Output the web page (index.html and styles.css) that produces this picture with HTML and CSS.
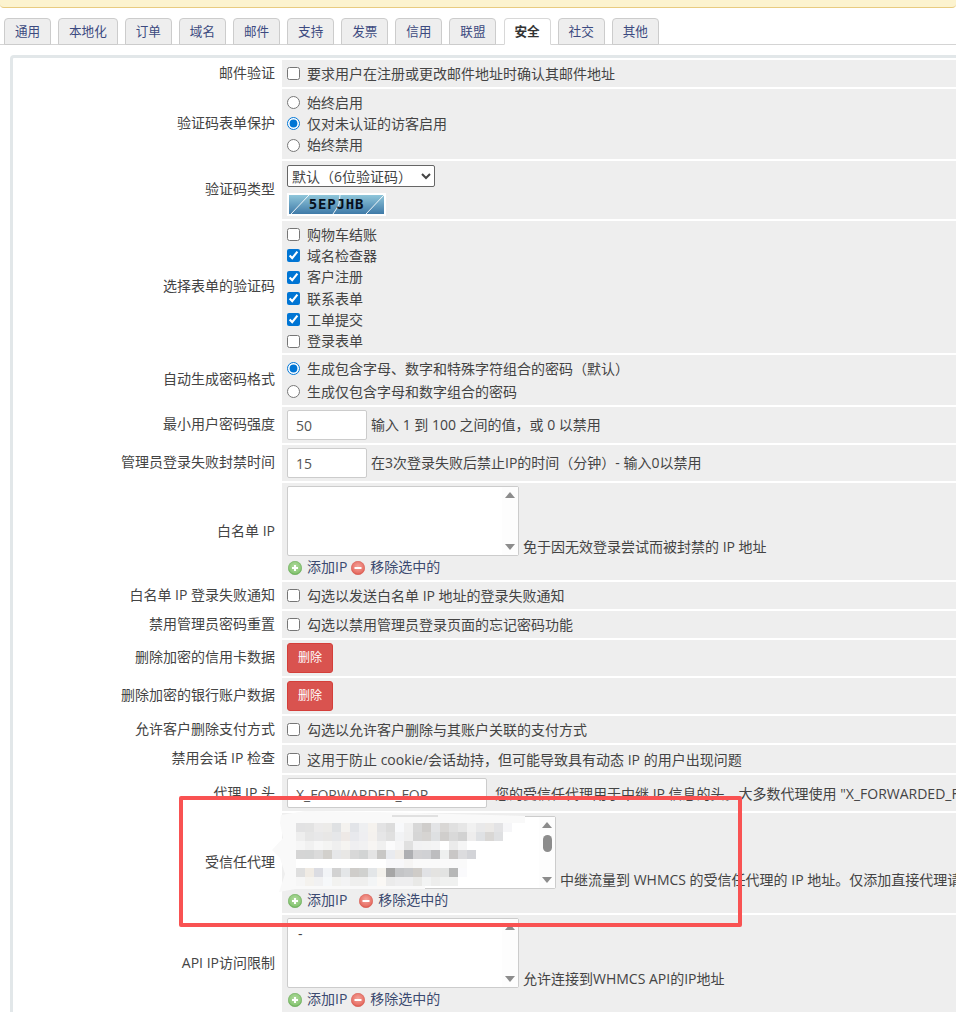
FILE: index.html
```html
<!DOCTYPE html>
<html lang="zh-CN">
<head>
<meta charset="utf-8">
<title>安全设置</title>
<link rel="stylesheet" href="styles.css">
</head>
<body>
<div class="notice"></div>
<ul class="tabs">
  <li><a>通用</a></li><li><a>本地化</a></li><li><a>订单</a></li><li><a>域名</a></li><li><a>邮件</a></li><li><a>支持</a></li><li><a>发票</a></li><li><a>信用</a></li><li><a>联盟</a></li><li class="active"><a>安全</a></li><li><a>社交</a></li><li><a>其他</a></li>
</ul>
<div class="panel">
  <div class="row h27"><div class="lbl">邮件验证</div><div class="fld"><label class="opt"><input type="checkbox">要求用户在注册或更改邮件地址时确认其邮件地址</label></div></div>
  <div class="row h70"><div class="lbl">验证码表单保护</div><div class="fld">
    <label class="opt"><input type="radio" name="c">始终启用</label>
    <label class="opt"><input type="radio" name="c" checked>仅对未认证的访客启用</label>
    <label class="opt"><input type="radio" name="c">始终禁用</label>
  </div></div>
  <div class="row h58"><div class="lbl">验证码类型</div><div class="fld">
    <select class="sel"><option>默认（6位验证码）</option></select>
    <div class="captcha"><svg class="captcha-lines" viewBox="0 0 95 19" width="95" height="19"><path d="M2 19 20 0M77 19 95 0M44 19 48 13 50 9 51 0" /></svg><span>5EPJHB</span></div>
  </div></div>
  <div class="row h132"><div class="lbl">选择表单的验证码</div><div class="fld">
    <label class="opt"><input type="checkbox">购物车结账</label>
    <label class="opt"><input type="checkbox" checked>域名检查器</label>
    <label class="opt"><input type="checkbox" checked>客户注册</label>
    <label class="opt"><input type="checkbox" checked>联系表单</label>
    <label class="opt"><input type="checkbox" checked>工单提交</label>
    <label class="opt"><input type="checkbox">登录表单</label>
  </div></div>
  <div class="row h50"><div class="lbl">自动生成密码格式</div><div class="fld">
    <label class="opt"><input type="radio" name="p" checked>生成包含字母、数字和特殊字符组合的密码（默认）</label>
    <label class="opt"><input type="radio" name="p">生成仅包含字母和数字组合的密码</label>
  </div></div>
  <div class="row h36"><div class="lbl">最小用户密码强度</div><div class="fld inline"><input class="txt w80" value="50"><span>输入 1 到 100 之间的值，或 0 以禁用</span></div></div>
  <div class="row h36"><div class="lbl">管理员登录失败封禁时间</div><div class="fld inline"><input class="txt w80" value="15"><span>在3次登录失败后禁止IP的时间（分钟）- 输入0以禁用</span></div></div>
  <div class="row h97"><div class="lbl">白名单 IP</div><div class="fld list-fld">
    <div class="list-line"><div class="listbox w232"><div class="sb"><i class="up"></i><i class="down"></i></div></div><span class="hint">免于因无效登录尝试而被封禁的 IP 地址</span></div>
    <div class="actions"><svg class="ic" viewBox="0 0 14 14"><use href="#plus"/></svg><a>添加IP</a><svg class="ic ic-rm" viewBox="0 0 14 14"><use href="#minus"/></svg><a>移除选中的</a></div>
  </div></div>
  <div class="row h27"><div class="lbl">白名单 IP 登录失败通知</div><div class="fld"><label class="opt"><input type="checkbox">勾选以发送白名单 IP 地址的登录失败通知</label></div></div>
  <div class="row h27"><div class="lbl">禁用管理员密码重置</div><div class="fld"><label class="opt"><input type="checkbox">勾选以禁用管理员登录页面的忘记密码功能</label></div></div>
  <div class="row h36"><div class="lbl">删除加密的信用卡数据</div><div class="fld inline"><button class="del">删除</button></div></div>
  <div class="row h36"><div class="lbl">删除加密的银行账户数据</div><div class="fld inline"><button class="del">删除</button></div></div>
  <div class="row h27"><div class="lbl">允许客户删除支付方式</div><div class="fld"><label class="opt"><input type="checkbox">勾选以允许客户删除与其账户关联的支付方式</label></div></div>
  <div class="row h28"><div class="lbl">禁用会话 IP 检查</div><div class="fld"><label class="opt"><input type="checkbox">这用于防止 cookie/会话劫持，但可能导致具有动态 IP 的用户出现问题</label></div></div>
  <div class="row h36"><div class="lbl lbl-low">代理 IP 头</div><div class="fld inline"><input class="txt w200 txt-low" value="X_FORWARDED_FOR"><span class="gap-l">您的受信任代理用于中继 IP 信息的头。大多数代理使用 "X_FORWARDED_FOR"。</span></div></div>
  <div class="row h100"><div class="lbl">受信任代理</div><div class="fld list-fld">
    <div class="list-line"><div class="listbox w269"><div class="sb"><i class="up"></i><b class="thumb"></b><i class="down"></i></div></div><span class="hint">中继流量到 WHMCS 的受信任代理的 IP 地址。仅添加直接代理请求到您服务器的代理。</span></div>
    <div class="actions"><svg class="ic" viewBox="0 0 14 14"><use href="#plus"/></svg><a>添加IP</a><svg class="ic ic-rm wide" viewBox="0 0 14 14"><use href="#minus"/></svg><a>移除选中的</a></div>
  </div></div>
  <div class="row h97"><div class="lbl">API IP访问限制</div><div class="fld list-fld">
    <div class="list-line"><div class="listbox w232"><span class="item">-</span><div class="sb"><i class="up"></i><i class="down"></i></div></div><span class="hint">允许连接到WHMCS API的IP地址</span></div>
    <div class="actions"><svg class="ic" viewBox="0 0 14 14"><use href="#plus"/></svg><a>添加IP</a><svg class="ic ic-rm" viewBox="0 0 14 14"><use href="#minus"/></svg><a>移除选中的</a></div>
  </div></div>
</div>

<svg class="defs" width="0" height="0">
  <defs>
    <radialGradient id="gg" cx="50%" cy="40%" r="65%"><stop offset="0" stop-color="#b5dca2"/><stop offset=".7" stop-color="#8cc878"/><stop offset="1" stop-color="#5aa648"/></radialGradient>
    <radialGradient id="gr" cx="50%" cy="40%" r="65%"><stop offset="0" stop-color="#f4a59c"/><stop offset=".7" stop-color="#e8746a"/><stop offset="1" stop-color="#d44b3f"/></radialGradient>
    <g id="plus"><circle cx="7" cy="7" r="6.7" fill="url(#gg)" stroke="#6bab59" stroke-width=".6"/><path d="M7 4v6M4 7h6" stroke="#fff" stroke-width="2"/></g>
    <g id="minus"><circle cx="7" cy="7" r="6.7" fill="url(#gr)" stroke="#d65a50" stroke-width=".6"/><path d="M3.5 7h7" stroke="#fff" stroke-width="2"/></g>
  </defs>
</svg>

<div class="mosaic">
  <svg class="blob" viewBox="0 0 255 84" width="255" height="84"><path class="blob-fill" d="M6 7 30 3 100 4 250 8V15H21V76H150V81H20L4 84 10 66 5 50-3 42 8 30 5 15Z"/><path class="blob-edge" d="M117 8H163"/></svg>
  <div class="mr mr1"></div>
  <div class="mr mr2"></div>
  <div class="mr mr3"></div>
  <div class="mr mr4"></div>
  <div class="mr mr5"></div>
  <div class="mr mr6"></div>
  <div class="mr mr7"></div>
</div>
<div class="callout"></div>
</body>
</html>
```
FILE: styles.css
```css
* { box-sizing: border-box; }
html, body { margin: 0; height: 1012px; overflow: hidden; background: #fff; }
body {
  position: relative;
  font: 14px/20px "Open Sans", "Noto Sans CJK SC", sans-serif;
  color: #333;
  white-space: nowrap;
}
.notice {
  height: 8px;
  background: #fcf3cf;
  border-bottom: 1px solid #e8cb80;
  border-radius: 0 0 4px 4px;
}
.tabs {
  display: flex;
  gap: 7.15px;
  list-style: none;
  margin: 10px 0 0;
  padding: 0 0 0 4px;
  height: 27px;
  border-bottom: 1px solid #d4d4d4;
}
.tabs li {
  height: 27px;
  padding: 0 9.9px;
  background: #eee;
  border: 1px solid #ccc;
  border-radius: 4px 4px 0 0;
  font-size: 12.6px;
  line-height: 25px;
  color: #3c4a80;
}
.tabs li.active {
  background: #fff;
  border-color: #d8d8d8;
  border-bottom-color: #fff;
  color: #333;
  font-weight: 600;
}
.panel {
  margin: 10px 0 0 10px;
  border-left: 3px solid #e2e7e9;
  border-top: 3px solid #e2e7e9;
  border-radius: 4px 0 0 0;
  padding: 2px 0 0 2px;
}
.row { display: flex; margin-bottom: 2px; }
.h27 { height: 27px; }
.h28 { height: 28px; }
.h36 { height: 36px; }
.h50 { height: 50px; }
.h58 { height: 58px; }
.h70 { height: 70px; }
.h97 { height: 97px; }
.h100 { height: 100px; }
.h132 { height: 132px; }
.lbl {
  flex: 0 0 267px;
  display: flex;
  align-items: center;
  justify-content: flex-end;
  padding: 0 7px 2px 0;
  color: #444;
}
.lbl-low { padding-bottom: 0; }
.fld {
  flex: 1;
  min-width: 0;
  padding: 3px 0 0 5px;
  background: #eee;
  color: #444;
}
.h28 > .fld { padding-top: 4px; }
.h50 > .fld { padding-top: 2px; }
.opt {
  display: flex;
  align-items: center;
  height: 21.3px;
}
.h50 .opt { height: 23px; }
.opt input {
  flex: none;
  width: 13px;
  height: 13px;
  margin: 0 7px 0 0;
  accent-color: #0075d4;
}
.sel {
  display: block;
  width: 148px;
  height: 22px;
  margin: 1px 0 6px;
  padding: 0;
  font: inherit;
  color: #444;
  background: #fff;
  border: 1px solid #666;
  border-radius: 2px;
}
.captcha {
  position: relative;
  width: 99px;
  height: 23px;
  border: 2px solid #fff;
  background: linear-gradient(#8fc6da, #3f7aa8);
  text-align: center;
  font: bold 14px/19px "DejaVu Sans Mono", monospace;
  letter-spacing: .8px;
  color: #06101c;
}
.captcha span { position: relative; }
.captcha-lines { position: absolute; left: 0; top: 0; }
.captcha-lines path { fill: none; stroke: #fff; stroke-width: 1; opacity: .9; }
.inline {
  display: flex;
  align-items: center;
  padding-top: 0;
}
.txt {
  flex: none;
  height: 30px;
  padding: 0 8px;
  font: inherit;
  color: #555;
  background: #fff;
  border: 1px solid #ccc;
  border-radius: 2px;
  outline: 0;
}
.txt-low { padding-top: 2px; }
.w80 { width: 80px; margin-right: 4px; }
.w200 { width: 200px; }
.gap-l { margin: 2px 0 0 8px; }
.list-line { display: flex; align-items: flex-end; }
.listbox {
  flex: none;
  position: relative;
  height: 70px;
  background: #fff;
  border: 1px solid #ccc;
  border-radius: 2px;
  padding: 5px 10px;
}
.w232 { width: 232px; }
.w269 { width: 269px; height: 73px; }
.hint { margin: 0 0 -1px 4px; }
.item { display: block; line-height: 20px; }
.sb {
  position: absolute;
  top: 0;
  right: 0;
  bottom: 0;
  width: 16px;
  display: flex;
  flex-direction: column;
  align-items: center;
  background: #fdfdfd;
}
.sb i { width: 0; height: 0; border: 5px solid transparent; border-top: 0; border-bottom: 0; }
.up { border-bottom: 6px solid #8c8c8c !important; margin-top: 5px; }
.down { border-top: 6px solid #8c8c8c !important; margin-top: auto; margin-bottom: 5px; }
.thumb { width: 9px; height: 17px; margin-top: 7px; background: #8c8c8c; border-radius: 5px; }
.actions {
  display: flex;
  align-items: center;
  height: 22px;
  color: #3c4a70;
}
.ic { width: 14px; height: 14px; margin: 1px 5px 0 1px; flex: none; }
.ic-rm { margin-left: 4px; }
.wide { margin-left: 12px; }
.del {
  width: 46px;
  height: 30px;
  padding: 0;
  font: 12px/1 "Open Sans", "Noto Sans CJK SC", sans-serif;
  color: #fff;
  background: #d9534f;
  border: 1px solid #d43f3a;
  border-radius: 3px;
}
.defs { position: absolute; }
.mosaic {
  position: absolute;
  left: 275px;
  top: 808px;
  width: 255px;
  height: 84px;
  padding: 15px 0 0 21px;
}
.blob { position: absolute; left: 0; top: 0; overflow: visible; }
.blob-fill { fill: #f9f9f9; }
.blob-edge { stroke: #c8c8c8; stroke-width: 1; }
.mr { position: relative; height: 9px; }
.mr1 { background: linear-gradient(90deg, #e2e2e3 0 9px, #e3e3e3 9px 18px, #ecebeb 18px 27px, #ecebe9 27px 36px, #dfe1e3 36px 45px, #f4f2ef 45px 54px, #e2e4e8 54px 63px, #eeeff1 63px 72px, #f5f2ee 72px 81px, #e3e3e4 81px 90px, #dcdcdc 90px 99px, #f8f9fb 99px 108px, #f0f0f0 108px 117px, #d8d8d8 117px 126px, #cfcdcb 126px 135px, #e3e4e6 135px 144px, #d9d7d5 144px 153px, #e0e0e0 153px 162px, #e6e6e6 162px 171px, #f1f1f1 171px 180px, #e9e9ea 180px 189px, #ebe9e7 189px 198px, #e3e3e5 198px 207px, #f6f6f8 207px 216px, transparent 216px); }
.mr2 { background: linear-gradient(90deg, #eeeeee 0 9px, #e6e6e6 9px 18px, #e8e8e9 18px 27px, #e8e7e6 27px 36px, #e6e7e9 36px 45px, #eee9e6 45px 54px, #e8e9ed 54px 63px, #eeeef1 63px 72px, #f4f1ee 72px 81px, #e6e6e7 81px 90px, #e0e0e0 90px 99px, #f2f3f5 99px 108px, #efefef 108px 117px, #d6d6d6 117px 126px, #d6d4d2 126px 135px, #dee0e2 135px 144px, #d0cecc 144px 153px, #d9d9d9 153px 162px, #d2d2d2 162px 171px, #eeeded 171px 180px, #dfe1e4 180px 189px, #d9d7d5 189px 198px, #dfe0e2 198px 207px, transparent 207px); }
.mr3 { background: linear-gradient(90deg, #f6f6f6 0 9px, #f1f1f1 9px 18px, #f7f7f7 18px 27px, #f4f4f3 27px 36px, #efefef 36px 45px, #f5f4f1 45px 54px, #efeff1 54px 63px, #f1f1f2 63px 72px, #f7f5f3 72px 81px, #f0f0f0 81px 90px, #fbfbfc 90px 99px, #f5f5f6 99px 108px, #e0e0e0 108px 117px, #f2f2f3 117px 126px, #f3f3f3 126px 135px, #f4f4f5 135px 144px, #ffffff 144px 153px, #ebebeb 153px 162px, #f5f5f5 162px 171px, transparent 171px); }
.mr4 { background: linear-gradient(90deg, #d5d5d5 0 9px, #d4d5d5 9px 18px, #dbdbdb 18px 27px, #d2d0cc 27px 36px, #e6e7e9 36px 45px, #e8e7e5 45px 54px, #d8d8d8 54px 63px, #d2d4d4 63px 72px, #e4e4e4 72px 81px, #c8c7c5 81px 90px, #e9ebef 90px 99px, #efece8 99px 108px, #aeafb2 108px 117px, #d2d2d4 117px 126px, #d0d1d4 126px 135px, #bdbdbf 135px 144px, #eef0ef 144px 153px, #c9c7c6 153px 162px, #dcdcde 162px 171px, #d3d4d8 171px 180px, transparent 180px); }
.mr5 { background: linear-gradient(90deg, transparent 0 90px, #f8f8fa 90px 108px, #f6f5f4 108px 117px, #fafafa 117px 171px, transparent 171px); }
.mr6 { background: linear-gradient(90deg, #dfdfdf 0 9px, #f0ebe4 9px 18px, #dbdce2 18px 27px, #f2f4f7 27px 36px, #d2d2d2 36px 45px, #e4e6e8 45px 54px, #cfcdca 54px 63px, #d0d1cf 63px 72px, #e3e6e8 72px 81px, #f3f1ec 81px 90px, #a6a6a6 90px 99px, #c4c5c7 99px 108px, #c8c9cb 108px 117px, #cfccc8 117px 126px, #e1e2e5 126px 135px, #e4e3e1 135px 144px, #e2e3e2 144px 153px, #b6b7b7 153px 162px, #fafafc 162px 171px, transparent 171px); }
.mr7 { background: linear-gradient(90deg, #f6f6f6 0 9px, #f4f2ee 9px 18px, #f1f1f2 18px 27px, #f6f8fa 27px 36px, #f2f2f0 36px 45px, #f3f3f4 45px 54px, #efefee 54px 72px, #f3f5f6 72px 81px, #faf8f5 81px 90px, #ebebeb 90px 99px, #eeeeef 99px 117px, #e9e9e7 117px 126px, #f2f3f3 126px 135px, #ededec 135px 144px, #f0f1f0 144px 162px, transparent 162px); }
.callout {
  position: absolute;
  left: 179px;
  top: 796px;
  width: 563px;
  height: 131px;
  border: 4px solid #f95252;
  border-radius: 2px;
}
```
